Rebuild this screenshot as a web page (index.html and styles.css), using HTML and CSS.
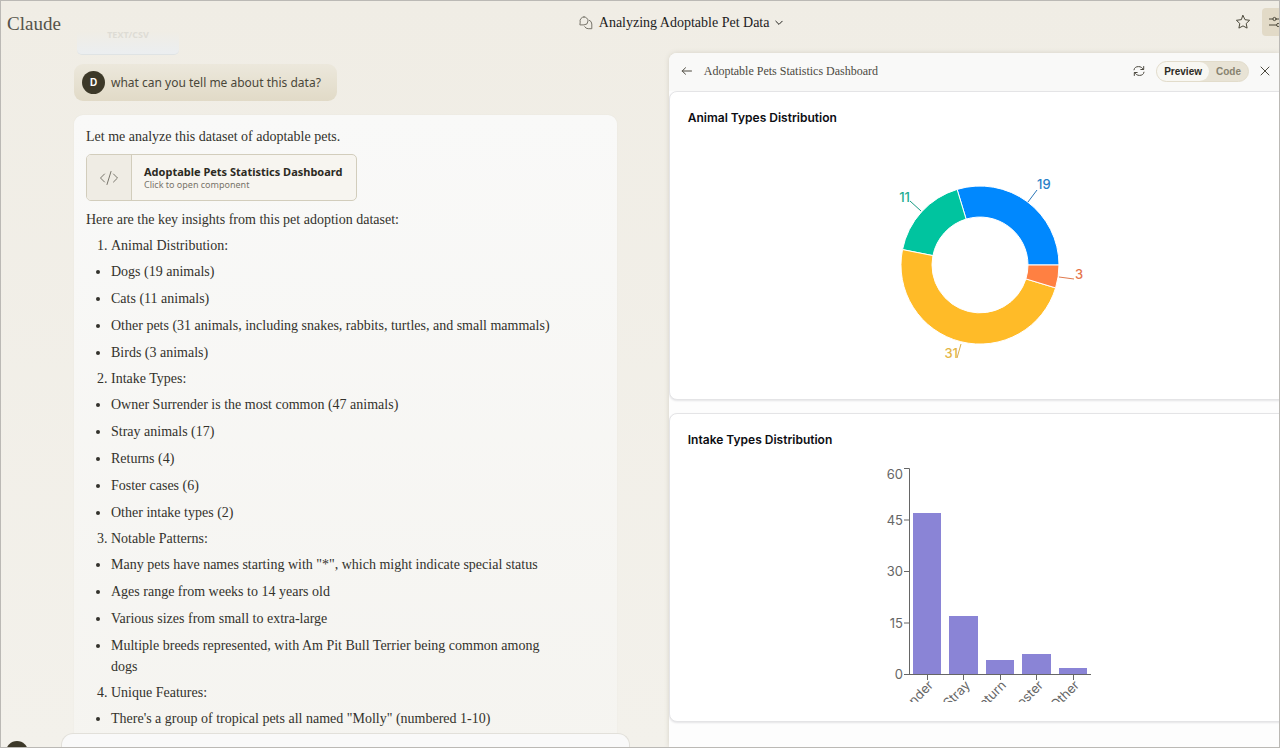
FILE: index.html
```html
<!DOCTYPE html>
<html lang="en">
<head>
<meta charset="utf-8">
<meta name="viewport" content="width=device-width, initial-scale=1">
<title>Analyzing Adoptable Pet Data</title>
<link rel="stylesheet" href="styles.css">
</head>
<body>
<div class="app">
  <header class="topbar">
    <a class="brand" href="#">Claude</a>
    <button class="chat-title" type="button">
      <svg width="14" height="14" viewBox="0 0 14 14" class="icon muted"><path d="M4.900 .9a4 4 0 0 1 3.800 5.200L9 8.900H4.900a4 4 0 1 1 0-8z" transform="matrix(-1 0 0 1 9.900 0)"/><path d="M10.200 4.200a4 4 0 0 1 2.600 3.800v4.700H9.200a4 4 0 0 1-3.500-2"/></svg>
      <span>Analyzing Adoptable Pet Data</span>
      <svg width="8" height="6" viewBox="0 0 8 6" class="icon"><path d="M.8 1.200 4 4.400 7.200 1.200"/></svg>
    </button>
    <div class="top-actions">
      <button class="star" type="button" aria-label="Star chat"><svg width="16" height="16" viewBox="0 0 16 16" class="icon"><path d="M8 1.500 10 5.700l4.600.6-3.400 3.200.9 4.600L8 11.900l-4.100 2.200.9-4.600L1.400 6.300 6 5.700z"/></svg></button>
      <button class="controls" type="button" aria-label="Chat controls"><svg width="16" height="12" viewBox="0 0 16 12" class="icon"><path d="M0 3h3.800M7.200 3H16M0 9h7.500M11 9h5"/><circle cx="5.500" cy="3" r="1.600"/><circle cx="9.200" cy="9" r="1.600"/></svg></button>
    </div>
  </header>
  <main class="workspace">
    <section class="chat">
      <div class="messages">
        <div class="file-chip">TEXT/CSV</div>
        <div class="user-message"><span class="avatar">D</span><span>what can you tell me about this data?</span></div>
        <article class="reply">
          <p>Let me analyze this dataset of adoptable pets.</p>
          <button class="artifact" type="button">
            <span class="artifact-icon"><svg width="20" height="16" viewBox="0 0 20 16" class="icon"><path d="M5.500 4 1.500 8l4 4M14.500 4l4 4-4 4M12 1.500 8 14.500"/></svg></span>
            <span class="artifact-text"><strong>Adoptable Pets Statistics Dashboard</strong><small>Click to open component</small></span>
          </button>
          <p>Here are the key insights from this pet adoption dataset:</p>
          <ol>
            <li>Animal Distribution:
              <ul><li>Dogs (19 animals)</li><li>Cats (11 animals)</li><li>Other pets (31 animals, including snakes, rabbits, turtles, and small mammals)</li><li>Birds (3 animals)</li></ul>
            </li>
            <li>Intake Types:
              <ul><li>Owner Surrender is the most common (47 animals)</li><li>Stray animals (17)</li><li>Returns (4)</li><li>Foster cases (6)</li><li>Other intake types (2)</li></ul>
            </li>
            <li>Notable Patterns:
              <ul><li>Many pets have names starting with "*", which might indicate special status</li><li>Ages range from weeks to 14 years old</li><li>Various sizes from small to extra-large</li><li>Multiple breeds represented, with Am Pit Bull Terrier being common among dogs</li></ul>
            </li>
            <li>Unique Features:
              <ul><li>There's a group of tropical pets all named "Molly" (numbered 1-10)</li></ul>
            </li>
          </ol>
        </article>
      </div>
      <div class="composer"></div>
      <span class="account"></span>
    </section>
    <section class="panel">
      <div class="panel-bar">
        <button type="button" aria-label="Back"><svg width="12" height="10" viewBox="0 0 12 10" class="icon"><path d="M10.500 5H1.200M4.500 1.800 1.200 5l3.300 3.200"/></svg></button>
        <h1>Adoptable Pets Statistics Dashboard</h1>
        <button type="button" aria-label="Refresh"><svg width="12" height="12" viewBox="0 0 12 12" class="icon"><path d="M1 4.800C1.300 2.700 3 1.600 5.500 1.600c2.300 0 3.700 1 4.800 2.800M10.700 1.500v3H7.800M11 7.200c-.3 2.100-2 3.200-4.500 3.200-2.300 0-3.700-1-4.800-2.800M1.300 10.500v-3h2.900"/></svg></button>
        <div class="switch"><button class="on" type="button">Preview</button><button type="button">Code</button></div>
        <button type="button" aria-label="Close"><svg width="10" height="10" viewBox="0 0 10 10" class="icon"><path d="m1 1 8 8M9 1 1 9"/></svg></button>
      </div>
      <div class="cards">
        <section class="card">
          <h2>Animal Types Distribution</h2>
          <svg class="chart" width="240" height="244" viewBox="0 0 240 244" role="img" aria-label="Animals by type">
            <g transform="translate(120 129)">
              <g stroke="#fff">
                <path fill="#0088fe" d="M79 0A79 79 0 0 0-22.900-75.600L-13.900-45.900A48 48 0 0 1 48 0z"/>
                <path fill="#00c49f" d="M-22.900-75.600A79 79 0 0 0-77.500-15.400L-47.100-9.400A48 48 0 0 1-13.900-45.900z"/>
                <path fill="#ffbb28" d="M-77.500-15.400A79 79 0 0 0 75.600 22.900L45.900 13.900A48 48 0 0 1-47.100-9.400z"/>
                <path fill="#ff8042" d="M75.600 22.900A79 79 0 0 0 79 0H48A48 48 0 0 1 45.900 13.900z"/>
              </g>
              <path stroke="#2a76b8" d="m48-63 9-12"/><path stroke="#169b83" d="m-59-54-11-10"/><path stroke="#dcb04a" d="m-19 79-4 14"/><path stroke="#e07a4e" d="m79 12 15 2"/>
              <g font-weight="500">
                <text x="57" y="-76" fill="#2a80c8">19</text>
                <text x="-70" y="-63" fill="#22ab90" text-anchor="end">11</text>
                <text x="-22" y="93" fill="#e3b545" text-anchor="end">31</text>
                <text x="95" y="14" fill="#e5754a">3</text>
              </g>
            </g>
          </svg>
        </section>
        <section class="card">
          <h2>Intake Types Distribution</h2>
          <svg class="chart" width="240" height="244" viewBox="0 0 240 244" role="img" aria-label="Animals by intake type">
            <g fill="#8a84d6"><path d="M53 55h28v161H53zM89 158h29v58H89zM126 202h28v14h-28zM162 196h29v20h-29zM199 210h28v6h-28z"/></g>
            <path fill="none" stroke="#666" d="M44 10.500h5.500v206M44 62h5M44 113.500h5M44 165h5M44 216.500h187M67.500 216v6M103.500 216v6M140.500 216v6M176.500 216v6M213.500 216v6"/>
            <g fill="#666" text-anchor="end">
              <text x="43" y="21">60</text><text x="43" y="67">45</text><text x="43" y="118">30</text><text x="43" y="170">15</text><text x="43" y="221">0</text>
              <text transform="translate(74 228) rotate(-45)">Owner Surrender</text>
              <text transform="translate(111 228) rotate(-45)">Stray</text>
              <text transform="translate(147 228) rotate(-45)">Return</text>
              <text transform="translate(184 228) rotate(-45)">Foster</text>
              <text transform="translate(220 228) rotate(-45)">Other</text>
            </g>
          </svg>
        </section>
      </div>
    </section>
  </main>
</div>
</body>
</html>
```
FILE: styles.css
```css
* { box-sizing: border-box; }
body { margin: 0; color: #33322c; background: #f0ede4; font-family: "Liberation Serif", serif; }
button { padding: 0; border: 0; background: none; color: inherit; font: inherit; cursor: pointer; }
svg { display: block; flex: none; }
.icon { fill: none; stroke: currentColor; stroke-linecap: round; stroke-linejoin: round; }
.muted { color: #77746a; }

.app {
  height: 100vh;
  display: flex;
  flex-direction: column;
  overflow: hidden;
  border: 1px solid #bbb9b5;
  background: linear-gradient(#f0ede5, #f3f1eb);
}
.topbar {
  flex: none;
  height: 52px;
  padding: 7px 0 0 6px;
  display: grid;
  grid-template-columns: 15fr auto 13fr;
  align-items: start;
}
.brand { color: #55534a; font-size: 19px; line-height: 32px; text-decoration: none; }
.chat-title { display: flex; align-items: center; gap: 6px; height: 30px; font-size: 14px; color: #22211d; }
.top-actions { display: flex; justify-content: flex-end; gap: 11px; overflow: hidden; }
.star { height: 28px; color: #4c493b; }
.controls { width: 17px; height: 28px; padding-left: 7px; border-radius: 4px 0 0 4px; background: #e2dac7; color: #4c493b; overflow: hidden; }

.workspace { flex: 1; min-height: 0; display: grid; grid-template-columns: 12fr 11fr; }
.chat { position: relative; min-width: 0; min-height: 0; margin-top: -22px; padding: 0 38px 0 60px; }
.messages { height: 100%; padding: 0 13px; overflow: hidden; display: flex; flex-direction: column; align-items: flex-start; }
.file-chip {
  flex: none;
  width: 102px;
  height: 24px;
  margin: 0 3px 9px;
  border-radius: 0 0 5px 5px;
  border-bottom: 1px solid #dfe3e4;
  background: linear-gradient(#f0ede5, #ebeef0);
  color: #dedcd5;
  font: bold 9px/8px "Open Sans", sans-serif;
  text-align: center;
}
.user-message {
  flex: none;
  display: flex;
  align-items: center;
  gap: 6px;
  height: 37px;
  padding: 0 16px 0 8px;
  margin-bottom: 14px;
  border-radius: 9px;
  background: linear-gradient(#ece8dc, #e1dac7);
  color: #4a4739;
  font: 12px/20px "Noto Sans", sans-serif;
}
.avatar { width: 23px; height: 23px; border-radius: 50%; background: #3d3929; color: #fff; font: bold 10px/23px Inter, sans-serif; text-align: center; }
.reply {
  flex: none;
  width: 100%;
  padding: 11px 50px 24px 12px;
  border-radius: 9px;
  background: linear-gradient(#f9f9f8, #f5f4f0);
  box-shadow: 0 0 1px #dcd9d0;
  font-size: 14px;
  line-height: 21px;
}
.reply p { margin: 0; }
.artifact {
  display: flex;
  height: 47px;
  margin: 7px 0 8px;
  border: 1px solid #d2cdbc;
  border-radius: 5px;
  overflow: hidden;
  background: #f7f5f0;
  text-align: left;
  font-family: "Noto Sans", sans-serif;
}
.artifact-icon { display: grid; place-items: center; width: 45px; height: 100%; border-right: 1px solid #d2cdbc; background: #efece4; color: #77746a; }
.artifact-text { display: flex; flex-direction: column; justify-content: center; height: 100%; padding: 0 14px 0 12px; }
.artifact-text strong { font-size: 11px; line-height: 14px; color: #2c2a22; }
.artifact-text small { font-size: 9px; line-height: 12px; color: #77746a; }
.reply ol { margin: 5px 0 0; padding-left: 25px; }
.reply ul { margin: 5px 0; padding: 0; list-style: disc; }
.reply ul li + li { margin-top: 6px; }
.composer { position: absolute; left: 60px; right: 38px; bottom: 0; height: 14px; border: 1px solid #e2e0da; border-bottom: 0; border-radius: 12px 12px 0 0; background: #f9f9f9; }
.account { position: absolute; left: 5px; bottom: -16px; width: 22px; height: 22px; border-radius: 50%; background: #3d3929; }

.panel { min-width: 0; min-height: 0; margin-left: 1px; overflow: hidden; border-top-left-radius: 8px; background: #fdfdfd; box-shadow: 0 0 5px #d5d1c6; }
.panel-bar { display: flex; align-items: center; height: 38px; padding: 0 9px 2px 12px; gap: 11px; background: #f9f9f8; color: #4c493f; }
.panel-bar h1 { flex: 1; margin: 0; font-size: 12px; line-height: 18px; font-weight: 400; }
.switch { display: flex; height: 21px; border: 1px solid #e2dccb; border-radius: 11px; background: #e8e3d5; color: #87826f; font: bold 10px/19px "Liberation Sans", sans-serif; }
.switch button { padding: 0 7px; }
.switch .on { border-radius: 10px; background: #f8f7f2; color: #2c2a22; }
.cards { display: flex; flex-direction: column; gap: 13px; margin-right: -13px; }
.card { padding: 16px 18px 19px; border: 1px solid #e4e4e6; border-radius: 8px; background: #fff; box-shadow: 0 1px 2px #e4e4e6; font-family: Inter, sans-serif; }
.card h2 { margin: 0 0 8px; color: #0c0d12; font-size: 12px; line-height: 20px; font-weight: 600; }
.chart { margin: 0 auto; overflow: hidden; font-size: 13px; }
```
